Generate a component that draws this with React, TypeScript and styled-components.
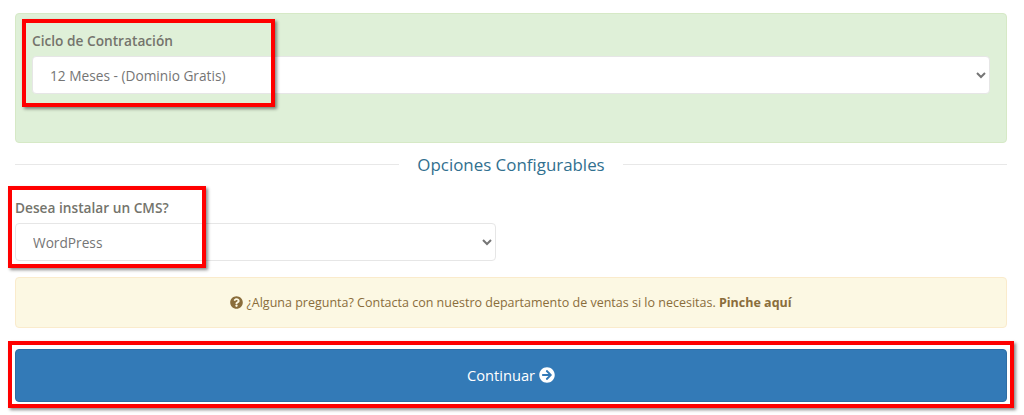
import React from 'react';
import styled, { createGlobalStyle } from 'styled-components';
import { FaArrowCircleRight, FaQuestionCircle } from 'react-icons/fa';

const GlobalStyle = createGlobalStyle`
  html, body {
    margin: 0;
    padding: 0;
    background: #fff;
  }

  body {
    font-family: "Open Sans", "Liberation Sans", sans-serif;
    color: #777;
  }
`;

const Page = styled.div`
  position: relative;
  box-sizing: border-box;
  width: 1024px;
  height: 415px;
  padding: 13px 17px 0 15px;
  overflow: hidden;
`;

const CyclePanel = styled.div`
  box-sizing: border-box;
  height: 130px;
  padding: 17px 16px 0;
  background: #dff0d8;
  border: 1px solid #d6e9c6;
  border-radius: 4px;
`;

const Field = styled.div<{ $width?: number }>`
  display: flex;
  flex-direction: column;
  gap: 5px;
  width: ${({ $width }) => ($width ? `${$width}px` : 'auto')};
`;

const Label = styled.label`
  font-size: 13.7px;
  line-height: 20px;
  font-weight: 600;
  color: #74746c;
`;

const Select = styled.select`
  box-sizing: border-box;
  width: 100%;
  height: 38px;
  padding: 0 14px 0 13px;
  background-color: #fff;
  border: 1px solid #e6e6e6;
  border-radius: 4px;
  font-family: inherit;
  font-size: 13.7px;
  color: #757575;
  outline: none;
`;

const Divider = styled.div`
  display: flex;
  align-items: center;
  gap: 18px;
  height: 42px;
  font-size: 16.9px;
  color: #31708f;

  &::before,
  &::after {
    content: '';
    flex: 1;
    height: 1px;
    background: #e8e8e8;
  }
`;

const ConfigOptions = styled.div`
  padding-top: 13px;
  margin-bottom: 16px;
`;

const Notice = styled.div`
  box-sizing: border-box;
  display: flex;
  align-items: center;
  justify-content: center;
  gap: 3px;
  height: 51px;
  background: #fcf8e3;
  border: 1px solid #faebcc;
  border-radius: 4px;
  font-size: 12.5px;
  color: #8a6d3b;

  b {
    font-weight: 700;
  }

  svg {
    font-size: 13px;
  }
`;

const ContinueButton = styled.button`
  box-sizing: border-box;
  display: flex;
  align-items: center;
  justify-content: center;
  gap: 4px;
  width: 100%;
  height: 53px;
  margin-top: 21px;
  padding: 0 0 2px;
  background: #337ab7;
  border: 1px solid #2e6da4;
  border-radius: 4px;
  font-family: inherit;
  font-size: 14.7px;
  color: #fff;

  svg {
    font-size: 16px;
  }
`;

const Highlight = styled.div<{ $left: number; $top: number; $width: number; $height: number }>`
  position: absolute;
  box-sizing: border-box;
  left: ${({ $left }) => $left}px;
  top: ${({ $top }) => $top}px;
  width: ${({ $width }) => $width}px;
  height: ${({ $height }) => $height}px;
  border: 4px solid #f00;
  box-shadow: 2px 2px 3px rgba(0, 0, 0, 0.45);
  pointer-events: none;
`;

export default function App() {
  return (
    <Page>
      <GlobalStyle />
      <CyclePanel>
        <Field>
          <Label>Ciclo de Contratación</Label>
          <Select defaultValue="12">
            <option value="12">12 Meses - (Dominio Gratis)</option>
          </Select>
        </Field>
      </CyclePanel>
      <Divider>Opciones Configurables</Divider>
      <ConfigOptions>
        <Field $width={481}>
          <Label>Desea instalar un CMS?</Label>
          <Select defaultValue="wp">
            <option value="wp">WordPress</option>
          </Select>
        </Field>
      </ConfigOptions>
      <Notice>
        <FaQuestionCircle />
        <span>
          ¿Alguna pregunta? Contacta con nuestro departamento de ventas si lo necesitas. <b>Pinche aquí</b>
        </span>
      </Notice>
      <ContinueButton>
        Continuar <FaArrowCircleRight />
      </ContinueButton>
      <Highlight $left={22} $top={19} $width={253} $height={88} />
      <Highlight $left={8} $top={186} $width={198} $height={82} />
      <Highlight $left={8} $top={341} $width={1006} $height={67} />
    </Page>
  );
}
